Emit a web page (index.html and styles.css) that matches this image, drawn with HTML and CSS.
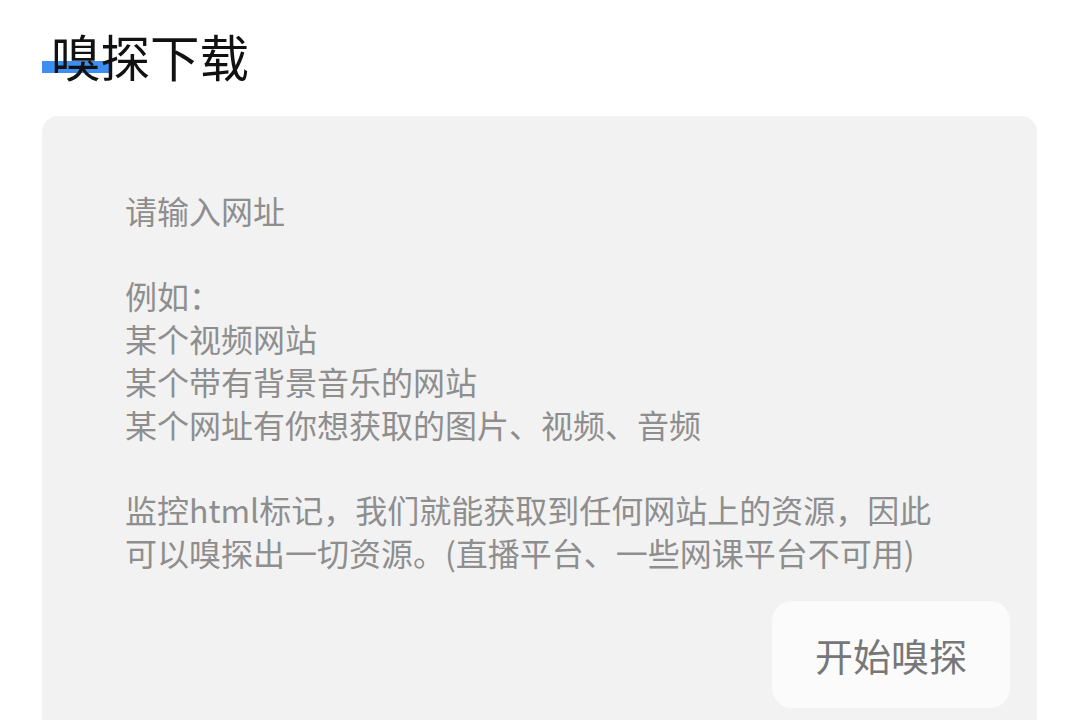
FILE: index.html
```html
<!DOCTYPE html>
<html lang="zh-CN">
<head>
    <meta charset="UTF-8">
    <meta name="viewport" content="width=device-width, initial-scale=1.0">
    <title>嗅探下载</title>
    <link rel="stylesheet" href="styles.css">
</head>
<body>
    <div class="page">
        <h1 class="title">嗅探下载</h1>
        <div class="card">
            <div class="hint">
                <p>请输入网址</p>
                <p class="gap">例如：</p>
                <p>某个视频网站</p>
                <p>某个带有背景音乐的网站</p>
                <p>某个网址有你想获取的图片、视频、音频</p>
                <p class="gap">监控html标记，我们就能获取到任何网站上的资源，因此</p>
                <p>可以嗅探出一切资源。(直播平台、一些网课平台不可用)</p>
            </div>
            <div class="actions">
                <button type="button" class="start-btn">开始嗅探</button>
            </div>
        </div>
    </div>
</body>
</html>
```

FILE: styles.css
```css
html, body {
    margin: 0;
    padding: 0;
    background: #ffffff;
    font-family: "Noto Sans CJK SC", "Noto Sans", sans-serif;
}
.page {
    padding: 26px 43px 0 42px;
}
.title {
    position: relative;
    z-index: 0;
    margin: 0 0 31px 9px;
    font-size: 49.5px;
    line-height: 59px;
    font-weight: 400;
    color: #111111;
}
.title::before {
    content: "";
    position: absolute;
    left: -9px;
    top: 35px;
    width: 68px;
    height: 12px;
    background: #3d8ef0;
    z-index: -1;
}
.card {
    background: #f2f2f2;
    border-radius: 16px;
    padding: 73px 27px 40px 83px;
}
.hint p {
    margin: 0;
    font-size: 32px;
    line-height: 42.7px;
    color: #8e8e8e;
}
.hint .gap {
    margin-top: 42.7px;
}
.actions {
    display: flex;
    justify-content: flex-end;
    margin-top: 28px;
}
.start-btn {
    width: 238px;
    height: 107px;
    border: none;
    border-radius: 20px;
    background: #fbfbfb;
    color: #777777;
    font-family: inherit;
    font-size: 38px;
    cursor: pointer;
}
```
